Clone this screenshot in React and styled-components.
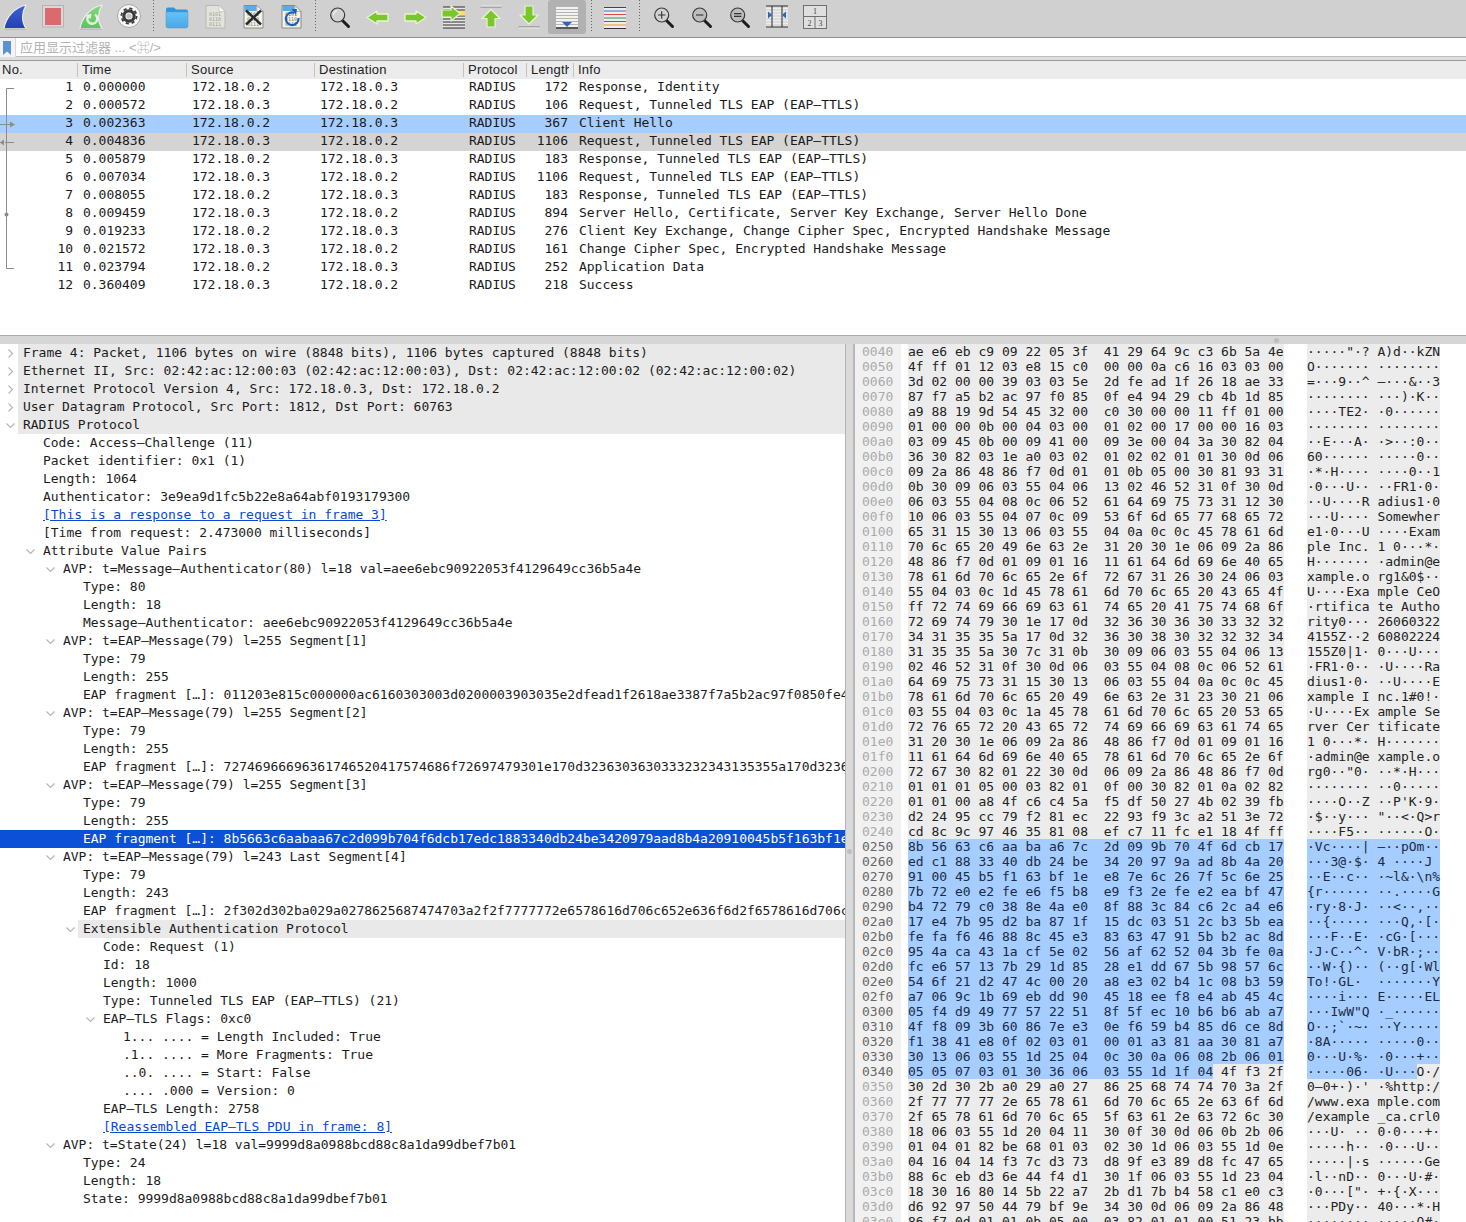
import React from "react";
import styled, { createGlobalStyle } from "styled-components";

const GlobalStyle = createGlobalStyle`
  html, body {
    margin: 0;
    padding: 0;
    height: 100%;
    background: #fff;
    overflow: hidden;
  }
  #root {
    height: 100%;
  }
`;

const MONO = `"DejaVu Sans Mono", "Liberation Mono", monospace`;

const packets = [
  [1, "0.000000", "172.18.0.2", "172.18.0.3", 172, "Response, Identity"],
  [2, "0.000572", "172.18.0.3", "172.18.0.2", 106, "Request, Tunneled TLS EAP (EAP–TTLS)"],
  [3, "0.002363", "172.18.0.2", "172.18.0.3", 367, "Client Hello"],
  [4, "0.004836", "172.18.0.3", "172.18.0.2", 1106, "Request, Tunneled TLS EAP (EAP–TTLS)"],
  [5, "0.005879", "172.18.0.2", "172.18.0.3", 183, "Response, Tunneled TLS EAP (EAP–TTLS)"],
  [6, "0.007034", "172.18.0.3", "172.18.0.2", 1106, "Request, Tunneled TLS EAP (EAP–TTLS)"],
  [7, "0.008055", "172.18.0.2", "172.18.0.3", 183, "Response, Tunneled TLS EAP (EAP–TTLS)"],
  [8, "0.009459", "172.18.0.3", "172.18.0.2", 894, "Server Hello, Certificate, Server Key Exchange, Server Hello Done"],
  [9, "0.019233", "172.18.0.2", "172.18.0.3", 276, "Client Key Exchange, Change Cipher Spec, Encrypted Handshake Message"],
  [10, "0.021572", "172.18.0.3", "172.18.0.2", 161, "Change Cipher Spec, Encrypted Handshake Message"],
  [11, "0.023794", "172.18.0.2", "172.18.0.3", 252, "Application Data"],
  [12, "0.360409", "172.18.0.3", "172.18.0.2", 218, "Success"],
];

// level, text, options: c = collapsed, o = open, g = grey row, s = selected, l = link
const details = [
  [0, "Frame 4: Packet, 1106 bytes on wire (8848 bits), 1106 bytes captured (8848 bits)", "cg"],
  [0, "Ethernet II, Src: 02:42:ac:12:00:03 (02:42:ac:12:00:03), Dst: 02:42:ac:12:00:02 (02:42:ac:12:00:02)", "cg"],
  [0, "Internet Protocol Version 4, Src: 172.18.0.3, Dst: 172.18.0.2", "cg"],
  [0, "User Datagram Protocol, Src Port: 1812, Dst Port: 60763", "cg"],
  [0, "RADIUS Protocol", "og"],
  [1, "Code: Access–Challenge (11)"],
  [1, "Packet identifier: 0x1 (1)"],
  [1, "Length: 1064"],
  [1, "Authenticator: 3e9ea9d1fc5b22e8a64abf0193179300"],
  [1, "[This is a response to a request in frame 3]", "l"],
  [1, "[Time from request: 2.473000 milliseconds]"],
  [1, "Attribute Value Pairs", "o"],
  [2, "AVP: t=Message–Authenticator(80) l=18 val=aee6ebc90922053f4129649cc36b5a4e", "o"],
  [3, "Type: 80"],
  [3, "Length: 18"],
  [3, "Message–Authenticator: aee6ebc90922053f4129649cc36b5a4e"],
  [2, "AVP: t=EAP–Message(79) l=255 Segment[1]", "o"],
  [3, "Type: 79"],
  [3, "Length: 255"],
  [3, "EAP fragment […]: 011203e815c000000ac6160303003d0200003903035e2dfead1f2618ae3387f7a5b2ac97f0850fe4"],
  [2, "AVP: t=EAP–Message(79) l=255 Segment[2]", "o"],
  [3, "Type: 79"],
  [3, "Length: 255"],
  [3, "EAP fragment […]: 72746966696361746520417574686f72697479301e170d3236303630333232343135355a170d3236"],
  [2, "AVP: t=EAP–Message(79) l=255 Segment[3]", "o"],
  [3, "Type: 79"],
  [3, "Length: 255"],
  [3, "EAP fragment […]: 8b5663c6aabaa67c2d099b704f6dcb17edc1883340db24be3420979aad8b4a20910045b5f163bf1e", "s"],
  [2, "AVP: t=EAP–Message(79) l=243 Last Segment[4]", "o"],
  [3, "Type: 79"],
  [3, "Length: 243"],
  [3, "EAP fragment […]: 2f302d302ba029a0278625687474703a2f2f7777772e6578616d706c652e636f6d2f6578616d706c"],
  [3, "Extensible Authentication Protocol", "og"],
  [4, "Code: Request (1)"],
  [4, "Id: 18"],
  [4, "Length: 1000"],
  [4, "Type: Tunneled TLS EAP (EAP–TTLS) (21)"],
  [4, "EAP–TLS Flags: 0xc0", "o"],
  [5, "1... .... = Length Included: True"],
  [5, ".1.. .... = More Fragments: True"],
  [5, "..0. .... = Start: False"],
  [5, ".... .000 = Version: 0"],
  [4, "EAP–TLS Length: 2758"],
  [4, "[Reassembled EAP–TLS PDU in frame: 8]", "l"],
  [2, "AVP: t=State(24) l=18 val=9999d8a0988bcd88c8a1da99dbef7b01", "o"],
  [3, "Type: 24"],
  [3, "Length: 18"],
  [3, "State: 9999d8a0988bcd88c8a1da99dbef7b01"],
];

const hexDump = `ae e6 eb c9 09 22 05 3f 41 29 64 9c c3 6b 5a 4e
4f ff 01 12 03 e8 15 c0 00 00 0a c6 16 03 03 00
3d 02 00 00 39 03 03 5e 2d fe ad 1f 26 18 ae 33
87 f7 a5 b2 ac 97 f0 85 0f e4 94 29 cb 4b 1d 85
a9 88 19 9d 54 45 32 00 c0 30 00 00 11 ff 01 00
01 00 00 0b 00 04 03 00 01 02 00 17 00 00 16 03
03 09 45 0b 00 09 41 00 09 3e 00 04 3a 30 82 04
36 30 82 03 1e a0 03 02 01 02 02 01 01 30 0d 06
09 2a 86 48 86 f7 0d 01 01 0b 05 00 30 81 93 31
0b 30 09 06 03 55 04 06 13 02 46 52 31 0f 30 0d
06 03 55 04 08 0c 06 52 61 64 69 75 73 31 12 30
10 06 03 55 04 07 0c 09 53 6f 6d 65 77 68 65 72
65 31 15 30 13 06 03 55 04 0a 0c 0c 45 78 61 6d
70 6c 65 20 49 6e 63 2e 31 20 30 1e 06 09 2a 86
48 86 f7 0d 01 09 01 16 11 61 64 6d 69 6e 40 65
78 61 6d 70 6c 65 2e 6f 72 67 31 26 30 24 06 03
55 04 03 0c 1d 45 78 61 6d 70 6c 65 20 43 65 4f
ff 72 74 69 66 69 63 61 74 65 20 41 75 74 68 6f
72 69 74 79 30 1e 17 0d 32 36 30 36 30 33 32 32
34 31 35 35 5a 17 0d 32 36 30 38 30 32 32 32 34
31 35 35 5a 30 7c 31 0b 30 09 06 03 55 04 06 13
02 46 52 31 0f 30 0d 06 03 55 04 08 0c 06 52 61
64 69 75 73 31 15 30 13 06 03 55 04 0a 0c 0c 45
78 61 6d 70 6c 65 20 49 6e 63 2e 31 23 30 21 06
03 55 04 03 0c 1a 45 78 61 6d 70 6c 65 20 53 65
72 76 65 72 20 43 65 72 74 69 66 69 63 61 74 65
31 20 30 1e 06 09 2a 86 48 86 f7 0d 01 09 01 16
11 61 64 6d 69 6e 40 65 78 61 6d 70 6c 65 2e 6f
72 67 30 82 01 22 30 0d 06 09 2a 86 48 86 f7 0d
01 01 01 05 00 03 82 01 0f 00 30 82 01 0a 02 82
01 01 00 a8 4f c6 c4 5a f5 df 50 27 4b 02 39 fb
d2 24 95 cc 79 f2 81 ec 22 93 f9 3c a2 51 3e 72
cd 8c 9c 97 46 35 81 08 ef c7 11 fc e1 18 4f ff
8b 56 63 c6 aa ba a6 7c 2d 09 9b 70 4f 6d cb 17
ed c1 88 33 40 db 24 be 34 20 97 9a ad 8b 4a 20
91 00 45 b5 f1 63 bf 1e e8 7e 6c 26 7f 5c 6e 25
7b 72 e0 e2 fe e6 f5 b8 e9 f3 2e fe e2 ea bf 47
b4 72 79 c0 38 8e 4a e0 8f 88 3c 84 c6 2c a4 e6
17 e4 7b 95 d2 ba 87 1f 15 dc 03 51 2c b3 5b ea
fe fa f6 46 88 8c 45 e3 83 63 47 91 5b b2 ac 8d
95 4a ca 43 1a cf 5e 02 56 af 62 52 04 3b fe 0a
fc e6 57 13 7b 29 1d 85 28 e1 dd 67 5b 98 57 6c
54 6f 21 d2 47 4c 00 20 a8 e3 02 b4 1c 08 b3 59
a7 06 9c 1b 69 eb dd 90 45 18 ee f8 e4 ab 45 4c
05 f4 d9 49 77 57 22 51 8f 5f ec 10 b6 b6 ab a7
4f f8 09 3b 60 86 7e e3 0e f6 59 b4 85 d6 ce 8d
f1 38 41 e8 0f 02 03 01 00 01 a3 81 aa 30 81 a7
30 13 06 03 55 1d 25 04 0c 30 0a 06 08 2b 06 01
05 05 07 03 01 30 36 06 03 55 1d 1f 04 4f f3 2f
30 2d 30 2b a0 29 a0 27 86 25 68 74 74 70 3a 2f
2f 77 77 77 2e 65 78 61 6d 70 6c 65 2e 63 6f 6d
2f 65 78 61 6d 70 6c 65 5f 63 61 2e 63 72 6c 30
18 06 03 55 1d 20 04 11 30 0f 30 0d 06 0b 2b 06
01 04 01 82 be 68 01 03 02 30 1d 06 03 55 1d 0e
04 16 04 14 f3 7c d3 73 d8 9f e3 89 d8 fc 47 65
88 6c eb d3 6e 44 f4 d1 30 1f 06 03 55 1d 23 04
18 30 16 80 14 5b 22 a7 2b d1 7b b4 58 c1 e0 c3
d6 92 97 50 44 79 bf 9e 34 30 0d 06 09 2a 86 48
86 f7 0d 01 01 0b 05 00 03 82 01 01 00 51 23 bb`.split("\n");

const SEL_START = 0x250;
const SEL_END = 0x34d;

const toChar = (b) => {
  const n = parseInt(b, 16);
  if (n === 0x2d) return "–";
  return n >= 0x20 && n < 0x7f ? String.fromCharCode(n) : "·";
};

const formatHex = (bytes) =>
  bytes.slice(0, 8).join(" ") + "  " + bytes.slice(8).join(" ");

const formatAscii = (bytes) =>
  bytes.slice(0, 8).map(toChar).join("") + " " + bytes.slice(8).map(toChar).join("");

/* toolbar icons, drawn on a 32x32 box */

const Fin = ({ id, from, to }) => (
  <>
    <defs>
      <linearGradient id={id} x1="0" y1="0" x2="0" y2="1">
        <stop offset="0" stopColor={from} />
        <stop offset="1" stopColor={to} />
      </linearGradient>
    </defs>
    <path d="M5 28.5C7 17 15 8 27 5C23 12 22 21 27 28.5Z" fill={`url(#${id})`} stroke="#eeeeee" strokeWidth="1.2" strokeLinejoin="round" />
    <path d="M5 29H27" stroke="#a9a9a9" strokeWidth="1" />
  </>
);

const SharkIcon = () => <Fin id="finBlue" from="#3f62d0" to="#2440b4" />;

const StopIcon = () => (
  <>
    <rect x="5.5" y="5.5" width="21" height="21.5" fill="#d8d8d8" stroke="#b4b4b4" />
    <rect x="8" y="8" width="16" height="17" fill="#d96a6e" />
  </>
);

const RestartIcon = () => (
  <>
    <Fin id="finGreen" from="#7fdc78" to="#5cc45c" />
    <path d="M20 14.5a5 5 0 1 1 -6.5 1" fill="none" stroke="#e6f0e4" strokeWidth="2.4" />
    <path d="M10.5 15.5L16.5 13.5L15.5 19Z" fill="#e6f0e4" />
  </>
);

const GearIcon = () => (
  <>
    <circle cx="16" cy="16" r="11.5" fill="#f6f6f6" stroke="#a6a6a6" />
    <circle cx="16" cy="16" r="5.2" fill="none" stroke="#3c3c3c" strokeWidth="3.2" />
    <circle cx="16" cy="16" r="7.6" fill="none" stroke="#3c3c3c" strokeWidth="1.8" strokeDasharray="3.2 2.77" />
    <circle cx="16" cy="16" r="2.6" fill="#c4c4c4" />
  </>
);

const FolderIcon = () => (
  <>
    <defs>
      <linearGradient id="folderFill" x1="0" y1="0" x2="0" y2="1">
        <stop offset="0" stopColor="#63c3f7" />
        <stop offset="1" stopColor="#4aa6e6" />
      </linearGradient>
    </defs>
    <path d="M5 9.5Q5 7.5 7 7.5H13L15 9.5H25Q27 9.5 27 11.5V12H5Z" fill="#2f95de" />
    <path d="M5 12H27V26Q27 28 25 28H7Q5 28 5 26Z" fill="url(#folderFill)" stroke="#6a9cbd" strokeWidth=".6" />
  </>
);

const BitText = styled.text`
  font-family: ${MONO};
  font-size: 5px;
  fill: ${(p) => p.$fill || "#8a8a7a"};
`;

const Sheet = ({ fill = "#eef0e6", stroke = "#b8b8b0", top }) => (
  <>
    <path d="M7 5.5H20L26 11.5V28H7Z" fill={fill} stroke={stroke} />
    {top && <path d="M7.5 6H19.5V11H7.5Z" fill={top} />}
    <path d="M20 5.5V11.5H26Z" fill="#fafafa" stroke={stroke} strokeWidth=".6" />
  </>
);

const Bits = ({ fill }) => (
  <>
    <BitText x="10" y="16" $fill={fill}>0101</BitText>
    <BitText x="10" y="21" $fill={fill}>0110</BitText>
    <BitText x="10" y="26" $fill={fill}>0111</BitText>
  </>
);

const FileIcon = () => (
  <>
    <Sheet fill="#e2e3da" />
    <Bits fill="#a0a098" />
  </>
);

const CloseIcon = () => (
  <>
    <Sheet fill="#f4f4e8" stroke="#8a8a8a" top="#55aeea" />
    <Bits fill="#777" />
    <path d="M9 10.5L24 24.5M24 10.5L9 24.5" stroke="#2a2a2a" strokeWidth="2.4" />
  </>
);

const ReloadIcon = () => (
  <>
    <Sheet fill="#f4f4e8" stroke="#8a8a8a" top="#55aeea" />
    <Bits fill="#777" />
    <path d="M19.5 12.8a6.4 6.4 0 1 0 4 5.2" fill="none" stroke="#1c5fb0" strokeWidth="2.2" />
    <path d="M16.5 9L22 9L21 15Z" fill="#1c5fb0" />
  </>
);

const Lens = ({ fill = "#d2d2d2", children }) => (
  <>
    <path d="M19.5 20.5L25.5 26.5" stroke="#1c1c1c" strokeWidth="3" strokeLinecap="round" />
    <circle cx="14.7" cy="15" r="7" fill={fill} stroke="#3a3a3a" strokeWidth="1.2" />
    {children}
  </>
);

const FindIcon = () => (
  <Lens>
    <path d="M10.5 15a4.5 4.5 0 0 1 3.5 -4.2" fill="none" stroke="#f4f4f4" strokeWidth="1.1" />
  </Lens>
);

const ZoomInIcon = () => (
  <Lens>
    <path d="M11 15H18.4M14.7 11.3V18.7" stroke="#333" strokeWidth="1.1" />
  </Lens>
);

const ZoomOutIcon = () => (
  <Lens fill="#bdbdbd">
    <path d="M11 15H18.4" stroke="#333" strokeWidth="1.1" />
  </Lens>
);

const ZoomResetIcon = () => (
  <Lens fill="#bdbdbd">
    <path d="M11 13.6H18.4M11 16.4H18.4" stroke="#333" strokeWidth="1.1" />
  </Lens>
);

const GREEN = "#78c82c";
const GREEN_EDGE = "#eef1d6";

const BackIcon = () => (
  <path d="M6 17.5L16 11V14H27V21H16V24Z" fill={GREEN} stroke={GREEN_EDGE} strokeWidth="1.3" strokeLinejoin="round" />
);

const ForwardIcon = () => (
  <path d="M27 17.5L17 11V14H6V21H17V24Z" fill={GREEN} stroke={GREEN_EDGE} strokeWidth="1.3" strokeLinejoin="round" />
);

const GotoIcon = () => (
  <>
    <rect x="6" y="7" width="22" height="21" fill="#e6e6e6" />
    {[7, 10, 13, 16, 19, 22, 25, 28].map((y) => (
      <path key={y} d={`M6 ${y}H28`} stroke="#2a2a2a" strokeWidth="1" />
    ))}
    <rect x="20" y="11" width="8" height="4.5" fill="#fbe05e" />
    <path d="M23 13.5L14 6V10H5V17H14V21Z" fill={GREEN} stroke={GREEN_EDGE} strokeWidth="1.2" strokeLinejoin="round" />
  </>
);

const FirstIcon = () => (
  <>
    <path d="M5.5 7H26.5" stroke="#8a8a8a" strokeWidth="1.2" />
    <path d="M5.5 6H26.5" stroke="#eeeeee" strokeWidth="1" />
    <path d="M16 9.5L25 18.5H20V27H12V18.5H7Z" fill={GREEN} stroke={GREEN_EDGE} strokeWidth="1.2" strokeLinejoin="round" />
  </>
);

const LastIcon = () => (
  <>
    <path d="M5.5 27H26.5" stroke="#8a8a8a" strokeWidth="1.2" />
    <path d="M5.5 28H26.5" stroke="#eeeeee" strokeWidth="1" />
    <path d="M16 24L25 15H20V6H12V15H7Z" fill={GREEN} stroke={GREEN_EDGE} strokeWidth="1.2" strokeLinejoin="round" />
  </>
);

const AutoScrollIcon = () => (
  <>
    <rect x="5" y="6" width="22" height="22" fill="#f2f2f2" />
    {[6, 9, 12, 15, 18, 21, 24, 27].map((y) => (
      <path key={y} d={`M5 ${y + 0.5}H27`} stroke="#9a9a9a" strokeWidth=".7" />
    ))}
    <path d="M5 28H27" stroke="#1e1e1e" strokeWidth="1.2" />
    <path d="M11 22H21L16 27Z" fill="#2b66b8" />
  </>
);

const ColorizeIcon = () => (
  <>
    <rect x="5" y="7" width="22" height="21" fill="#ececec" />
    {["#444", "#4468e0", "#d84848", "#3a8f5a", "#8a4aa0", "#e0a400", "#333"].map((c, i) => (
      <path key={i} d={`M5 ${7.5 + i * 3.5}H27`} stroke={c} strokeWidth="1" />
    ))}
  </>
);

const ResizeIcon = () => (
  <>
    <rect x="5" y="6" width="22" height="21" fill="#ededed" />
    {[7, 10, 13, 16, 19, 22, 25].map((y) => (
      <path key={y} d={`M5 ${y}H27`} stroke="#bdbdbd" strokeWidth=".7" />
    ))}
    <path d="M5 6H27M5 27H27M11 6V27M21 6V27" stroke="#2a2a2a" strokeWidth="1" />
    <path d="M7 12L11 15.5L7 19Z" fill="#2b66b8" transform="translate(0 -0.5)" />
    <path d="M25 12L21 15.5L25 19Z" fill="#2b66b8" transform="translate(0 -0.5)" />
  </>
);

const LayoutNumber = styled.text`
  font-family: "Liberation Serif", serif;
  font-size: 8px;
  fill: #444;
  text-anchor: middle;
`;

const LayoutIcon = () => (
  <>
    <rect x="4.5" y="5.5" width="23" height="23" fill="#dfdfdf" stroke="#6f6f6f" />
    <path d="M4.5 16.5H27.5M16 16.5V28.5" stroke="#6f6f6f" />
    <LayoutNumber x="16" y="14">1</LayoutNumber>
    <LayoutNumber x="10.5" y="25.5">2</LayoutNumber>
    <LayoutNumber x="21.5" y="25.5">3</LayoutNumber>
  </>
);

const toolGroups = [
  [SharkIcon, StopIcon, RestartIcon, GearIcon],
  [FolderIcon, FileIcon, CloseIcon, ReloadIcon],
  [FindIcon, BackIcon, ForwardIcon, GotoIcon, FirstIcon, LastIcon, AutoScrollIcon],
  [ColorizeIcon],
  [ZoomInIcon, ZoomOutIcon, ZoomResetIcon, ResizeIcon, LayoutIcon],
];

const Chevron = ({ open }) => (
  <svg width="9" height="9" viewBox="0 0 9 9">
    <path
      d={open ? "M0.5 2.5L4.5 6.5L8.5 2.5" : "M2.5 0.5L6.5 4.5L2.5 8.5"}
      fill="none"
      stroke="#b4b4b4"
      strokeWidth="1.1"
    />
  </svg>
);

const headers = ["No.", "Time", "Source", "Destination", "Protocol", "Length", "Info"];

const App = () => {
  return (
    <Window>
      <GlobalStyle />
      <Toolbar>
        {toolGroups.map((group, g) => (
          <React.Fragment key={g}>
            {g > 0 && <ToolSeparator />}
            {group.map((Icon, i) => (
              <ToolButton key={i} $pressed={Icon === AutoScrollIcon}>
                <svg width="32" height="32" viewBox="0 0 32 32">
                  <Icon />
                </svg>
              </ToolButton>
            ))}
          </React.Fragment>
        ))}
      </Toolbar>

      <FilterBar>
        <BookmarkSlot>
          <svg width="8" height="14" viewBox="0 0 8 14">
            <path d="M0 0H8V14L4 10.5L0 14Z" fill="#5b93d3" />
          </svg>
        </BookmarkSlot>
        <FilterHint>应用显示过滤器 ... &lt;⌘/&gt;</FilterHint>
      </FilterBar>

      <PacketPane>
        <PacketHeader>
          {headers.map((name, i) => (
            <HeaderCell key={name} $first={i === 0} $last={i === headers.length - 1}>
              <HeaderLabel>{name}</HeaderLabel>
            </HeaderCell>
          ))}
        </PacketHeader>
        <PacketBody>
          {packets.map(([no, time, src, dst, len, info]) => (
            <PacketRow key={no} $tone={no === 3 ? "selected" : no === 4 ? "related" : "plain"}>
              <NumberCell>{no}</NumberCell>
              <PacketCell>{time}</PacketCell>
              <PacketCell>{src}</PacketCell>
              <PacketCell>{dst}</PacketCell>
              <PacketCell>RADIUS</PacketCell>
              <LengthCell>{len}</LengthCell>
              <PacketCell>{info}</PacketCell>
            </PacketRow>
          ))}
          <RelatedLines width="20" height="216" viewBox="0 0 20 216">
            <path d="M14 9.5H6.5V189.5H14" fill="none" stroke="#8c8c8c" />
            <path d="M0 45.5H11M5 63.5H14M0 63.5H3" fill="none" stroke="#8c8c8c" />
            <path d="M10 42.5L15 45.5L10 48.5Z" fill="#8c8c8c" />
            <path d="M0 63.5L4 60.5V66.5Z" fill="#8c8c8c" />
            <circle cx="6.5" cy="135.5" r="2" fill="#8c8c8c" />
          </RelatedLines>
        </PacketBody>
      </PacketPane>

      <HorizontalSplit>
        <SplitDot />
      </HorizontalSplit>

      <BottomPane>
        <DetailsPane>
          {details.map(([level, text, flags = ""], i) => (
            <DetailRow key={i} $level={level} $selected={flags.includes("s")}>
              <Twisty>
                {flags.includes("c") && <Chevron />}
                {flags.includes("o") && <Chevron open />}
              </Twisty>
              <DetailLabel $grey={flags.includes("g")} $link={flags.includes("l")}>
                {text}
              </DetailLabel>
            </DetailRow>
          ))}
        </DetailsPane>

        <VerticalSplit>
          <SplitDot />
        </VerticalSplit>

        <HexPane>
          {hexDump.map((line, i) => {
            const offset = 0x40 + i * 16;
            const bytes = line.split(" ");
            const from = Math.max(SEL_START - offset, 0);
            const to = Math.min(SEL_END - offset, 16);
            const hasSel = to > 0 && from < 16;
            const hex = formatHex(bytes);
            const ascii = formatAscii(bytes);
            // the selection covers whole bytes, so cut the strings at the byte edge
            const hexCut = to >= 16 ? hex.length : to > 8 ? (to - 8) * 3 - 1 + 25 : to * 3 - 1;
            const asciiCut = to >= 16 ? ascii.length : to > 8 ? to + 1 : to;
            return (
              <HexLine key={offset}>
                <OffsetCell $active={hasSel}>{offset.toString(16).padStart(4, "0")}</OffsetCell>
                <HexCell>
                  {hasSel ? (
                    <>
                      <Picked>{hex.slice(0, hexCut)}</Picked>
                      {hex.slice(hexCut)}
                    </>
                  ) : (
                    hex
                  )}
                </HexCell>
                <AsciiCell>
                  {hasSel ? (
                    <>
                      <Picked>{ascii.slice(0, asciiCut)}</Picked>
                      {ascii.slice(asciiCut)}
                    </>
                  ) : (
                    ascii
                  )}
                </AsciiCell>
              </HexLine>
            );
          })}
        </HexPane>
      </BottomPane>
    </Window>
  );
};

export default App;

const Window = styled.div`
  height: 100vh;
  display: flex;
  flex-direction: column;
  overflow: hidden;
  background: #fff;
  color: #1c1c1c;
`;

const Toolbar = styled.div`
  flex: none;
  height: 38px;
  box-sizing: border-box;
  margin-left: -4px;
  display: flex;
  align-items: flex-start;
  background: #d0d0d0;
  border-bottom: 1px solid #8e8e8e;
`;

const ToolButton = styled.div`
  flex: none;
  width: 38px;
  height: 34px;
  display: flex;
  align-items: flex-start;
  justify-content: center;
  box-sizing: border-box;

  svg {
    display: block;
    flex: none;
  }

  ${(p) =>
    p.$pressed &&
    `
    background: #b1b1b1;
    border-radius: 3px;
  `}
`;

const ToolSeparator = styled.div`
  flex: none;
  width: 10px;
  height: 32px;
  box-sizing: border-box;
  background-image: linear-gradient(#666 50%, transparent 50%);
  background-size: 1px 3px;
  background-repeat: repeat-y;
  background-position: 5px 0;
`;

const FilterBar = styled.div`
  flex: none;
  height: 23px;
  box-sizing: border-box;
  display: flex;
  align-items: flex-start;
  background: #fff;
  border-bottom: 4px solid #dedede;
  box-shadow: inset 0 -1px 0 #bdbdbd;
  position: relative;

  &::after {
    content: "";
    position: absolute;
    left: 0;
    right: 0;
    bottom: -4px;
    height: 1px;
    background: #9a9a9a;
  }
`;

const BookmarkSlot = styled.div`
  flex: none;
  width: 16px;
  height: 19px;
  box-sizing: border-box;
  padding: 3px 0 0 3px;
  border-right: 1px solid #d8d8d8;
  background: #f4f4f4;

  svg {
    display: block;
  }
`;

const FilterHint = styled.div`
  padding-left: 4px;
  line-height: 19px;
  font-size: 13px;
  color: #b3b3b3;
  font-family: "Liberation Sans", "Noto Sans CJK SC", "DejaVu Sans", sans-serif;
  white-space: nowrap;
`;

const PacketPane = styled.div`
  flex: none;
  height: 274px;
  display: flex;
  flex-direction: column;
  overflow: hidden;
`;

const COLUMNS = "78px 109px 128px 149px 63px 47px 1fr";

const PacketHeader = styled.div`
  flex: none;
  height: 18px;
  display: grid;
  grid-template-columns: ${COLUMNS};
  align-items: center;
  background: #ececec;
`;

const HeaderCell = styled.div`
  height: 14px;
  line-height: 14px;
  box-sizing: border-box;
  padding-left: ${(p) => (p.$first ? "2px" : "4px")};
  border-right: ${(p) => (p.$last ? "none" : "1px solid #c2c2c2")};
`;

const HeaderLabel = styled.div`
  width: calc(100% - 4px);
  overflow: hidden;
  white-space: nowrap;
  font-family: "Liberation Sans", Arial, sans-serif;
  font-size: 13px;
  letter-spacing: 0.25px;
  color: #222;
`;

const PacketBody = styled.div`
  flex: 1;
  position: relative;
  overflow: hidden;
`;

const rowTones = {
  plain: "transparent",
  selected: "#a6cdff",
  related: "#d4d4d4",
};

const PacketRow = styled.div`
  height: 18px;
  display: grid;
  grid-template-columns: ${COLUMNS};
  background: ${(p) => rowTones[p.$tone]};
  font-family: ${MONO};
  font-size: 13px;
  letter-spacing: -0.015px;
  line-height: 15px;
  color: #1a1a1a;
  white-space: pre;
`;

const PacketCell = styled.div`
  padding-left: 5px;
  overflow: hidden;
`;

const NumberCell = styled.div`
  padding-right: 5px;
  text-align: right;
`;

const LengthCell = styled.div`
  padding-right: 6px;
  text-align: right;
`;

const RelatedLines = styled.svg`
  position: absolute;
  left: 0;
  top: 0;
`;

const HorizontalSplit = styled.div`
  flex: none;
  height: 9px;
  box-sizing: border-box;
  border-top: 1px solid #ababab;
  background: #d6d6d6;
  display: flex;
  align-items: center;
  justify-content: flex-end;
  padding-right: 187px;
`;

const SplitDot = styled.div`
  flex: none;
  width: 5px;
  height: 5px;
  border-radius: 50%;
  background: #bdbdbd;
`;

const BottomPane = styled.div`
  flex: 1;
  min-height: 0;
  display: flex;
  overflow: hidden;
`;

const DetailsPane = styled.div`
  flex: none;
  width: 845px;
  overflow: hidden;
`;

const DetailRow = styled.div`
  height: 18px;
  display: flex;
  box-sizing: border-box;
  padding-left: ${(p) => 3 + p.$level * 20}px;
  background: ${(p) => (p.$selected ? "#0b50d6" : "transparent")};
  color: ${(p) => (p.$selected ? "#fff" : "#1c1c1c")};
  font-family: ${MONO};
  font-size: 13px;
  letter-spacing: -0.015px;
  line-height: 17px;
  white-space: pre;
`;

const Twisty = styled.div`
  flex: none;
  width: 15px;
  display: flex;
  align-items: center;
  justify-content: center;
`;

const DetailLabel = styled.div`
  flex: 1;
  min-width: 0;
  overflow: hidden;
  padding-left: 5px;
  background: ${(p) => (p.$grey ? "#e9e9e9" : "transparent")};
  color: ${(p) => (p.$link ? "#0a48d0" : "inherit")};
  text-decoration: ${(p) => (p.$link ? "underline" : "none")};
`;

const VerticalSplit = styled.div`
  flex: none;
  width: 10px;
  box-sizing: border-box;
  border-left: 1px solid #b4b4b4;
  border-right: 2px solid #b8b8b8;
  background: #dadada;
  display: flex;
  align-items: center;
  justify-content: center;
  padding-top: 136px;
`;

const HexPane = styled.div`
  flex: 1;
  min-width: 0;
  overflow: hidden;
  font-family: ${MONO};
  font-size: 13px;
  line-height: 15px;
  white-space: pre;
  color: #222;
`;

const HexLine = styled.div`
  height: 15px;
  display: flex;
`;

const OffsetCell = styled.div`
  flex: none;
  width: 46px;
  box-sizing: border-box;
  padding-left: 7px;
  margin-right: 7px;
  background: #f1f1f1;
  color: ${(p) => (p.$active ? "#666" : "#aaa")};
`;

const HexCell = styled.div`
  flex: none;
  width: 376px;
  margin-right: 23px;
  background: #ececec;
`;

const AsciiCell = styled.div`
  flex: none;
  width: 133px;
  background: #ececec;
`;

const Picked = styled.span`
  background: #a6cdff;
  color: #1a2a44;
`;
